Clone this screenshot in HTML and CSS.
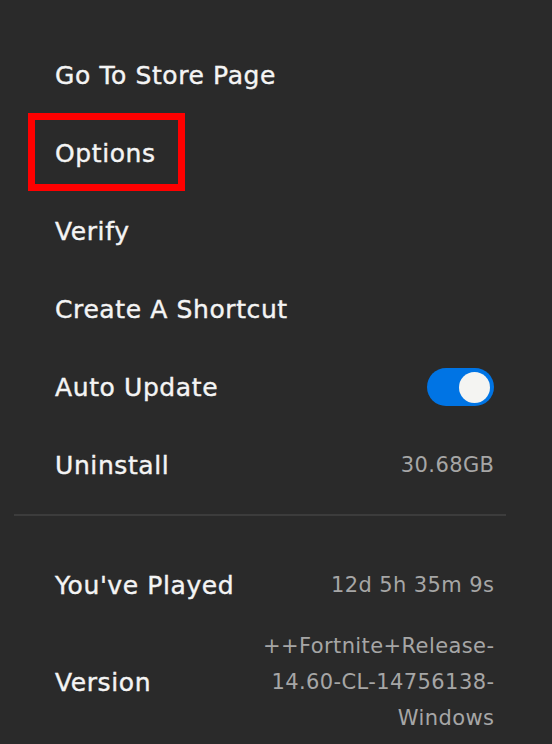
FILE: index.html
```html
<!DOCTYPE html>
<html lang="en">
<head>
  <meta charset="UTF-8" />
  <title>Game Menu</title>
  <link rel="stylesheet" href="styles.css">
</head>
<body>
  <div class="menu">
    <div class="row"><span class="label">Go To Store Page</span></div>
    <div class="row highlighted"><span class="label">Options</span></div>
    <div class="row"><span class="label">Verify</span></div>
    <div class="row"><span class="label">Create A Shortcut</span></div>
    <div class="row">
      <span class="label">Auto Update</span>
      <span class="toggle on"><span class="knob"></span></span>
    </div>
    <div class="row">
      <span class="label">Uninstall</span>
      <span class="value">30.68GB</span>
    </div>

    <hr class="divider" />

    <div class="row info">
      <span class="label">You've Played</span>
      <span class="value">12d 5h 35m 9s</span>
    </div>
    <div class="row info version">
      <span class="label">Version</span>
      <span class="value">++Fortnite+Release-<br>14.60-CL-14756138-<br>Windows</span>
    </div>
  </div>
</body>
</html>
```

FILE: styles.css
```css
body {
  margin: 0;
  background: #2a2a2a;
  color: #f4f4f4;
  font-family: "DejaVu Sans", sans-serif;
}
.menu {
  padding-top: 36px;
}
.row {
  position: relative;
  display: flex;
  align-items: center;
  justify-content: space-between;
  height: 78px;
  padding: 0 58px 0 55px;
}
.label {
  font-size: 25px;
  letter-spacing: 0.6px;
  -webkit-text-stroke: 0.4px currentColor;
}
.value {
  font-size: 21px;
  letter-spacing: 0.4px;
  color: #a6a6a6;
  text-align: right;
  line-height: 36px;
  margin-right: -0.4px;
}
.highlighted::after {
  content: "";
  position: absolute;
  left: 28px;
  top: -1px;
  width: 143px;
  height: 64px;
  border: 7px solid #ff0000;
}
.toggle {
  display: flex;
  align-items: center;
  width: 67px;
  height: 38px;
  border-radius: 19px;
  background: #0074e4;
  box-sizing: border-box;
  padding: 0 4px;
  justify-content: flex-end;
}
.knob {
  width: 31px;
  height: 31px;
  border-radius: 50%;
  background: #f4f4f2;
}
.divider {
  border: none;
  height: 2px;
  background: #3c3c3c;
  margin: 10px 46px 30px 14px;
}
.version {
  height: 108px;
  margin-top: 4px;
}
```
